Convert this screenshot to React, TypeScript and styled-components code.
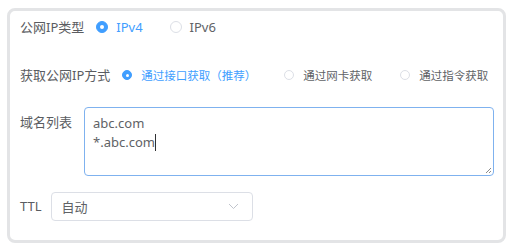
import * as React from "react";
import styled, { createGlobalStyle } from "styled-components";

const GlobalStyle = createGlobalStyle`
  html, body {
    margin: 0;
    padding: 0;
    background: #fff;
  }
  body {
    font-family: "Noto Sans", "Noto Sans CJK SC", sans-serif;
    color: #606266;
  }
`;

const Page = styled.div`
  width: 516px;
  height: 249px;
  padding: 8px 10px 6px 7px;
  box-sizing: border-box;
`;

const Card = styled.div`
  height: 235px;
  box-sizing: border-box;
  border: 3px solid #e3e4e6;
  border-radius: 8px;
  background: #fff;
  padding: 0 9px 0 10px;
  display: flex;
  flex-direction: column;
  gap: 16px;
`;

const Row = styled.div<{ $top?: boolean; $h?: number }>`
  display: flex;
  align-items: ${(p) => (p.$top ? "flex-start" : "center")};
  min-height: ${(p) => (p.$h ? `${p.$h}px` : "auto")};
`;

const Label = styled.span<{ $pad?: number; $gap?: number }>`
  font-size: 13px;
  line-height: 19px;
  color: #5a5c61;
  margin-right: ${(p) => (p.$gap ?? 12)}px;
  white-space: nowrap;
  padding-top: ${(p) => p.$pad || 0}px;
`;

const Options = styled.div<{ $gap: number }>`
  display: flex;
  align-items: center;
  gap: ${(p) => p.$gap}px;
`;

const Option = styled.label<{ $small?: boolean }>`
  display: flex;
  align-items: center;
  gap: ${(p) => (p.$small ? 9 : 8)}px;
  font-size: ${(p) => (p.$small ? "11.5px" : "13px")};
  white-space: nowrap;
`;

const Dot = styled.span<{ $on?: boolean; $size: number }>`
  width: ${(p) => p.$size}px;
  height: ${(p) => p.$size}px;
  box-sizing: border-box;
  border-radius: 50%;
  border: 1px solid ${(p) => (p.$on ? "#409eff" : "#dcdfe6")};
  background: ${(p) => (p.$on ? "#409eff" : "#fff")};
  display: flex;
  align-items: center;
  justify-content: center;
  &::after {
    content: "";
    width: ${(p) => Math.round(p.$size / 3)}px;
    height: ${(p) => Math.round(p.$size / 3)}px;
    border-radius: 50%;
    background: #fff;
    display: ${(p) => (p.$on ? "block" : "none")};
  }
`;

const OptText = styled.span<{ $on?: boolean }>`
  color: ${(p) => (p.$on ? "#409eff" : "#606266")};
`;

const Area = styled.div`
  position: relative;
  flex: 1;
  height: 69px;
  box-sizing: border-box;
  border: 1px solid #7fb2ef;
  border-radius: 4px;
  padding: 6px 8px;
  font-size: 13px;
  line-height: 19px;
  color: #606266;
`;

const Caret = styled.span`
  display: inline-block;
  width: 1px;
  height: 17px;
  background: #303133;
  vertical-align: -4px;
`;

const Grip = styled.svg`
  position: absolute;
  right: 1px;
  bottom: 1px;
`;

const Select = styled.div`
  width: 202px;
  height: 29px;
  box-sizing: border-box;
  border: 1px solid #dcdfe6;
  border-radius: 4px;
  display: flex;
  align-items: center;
  justify-content: space-between;
  padding: 0 13px 0 10px;
  font-size: 13px;
  color: #606266;
`;

export default function App() {
  return (
    <Page>
      <GlobalStyle />
      <Card>
        <Row $h={32}>
          <Label>公网IP类型</Label>
          <Options $gap={27}>
            <Option>
              <Dot $on $size={12} />
              <OptText $on>IPv4</OptText>
            </Option>
            <Option>
              <Dot $size={12} />
              <OptText>IPv6</OptText>
            </Option>
          </Options>
        </Row>
        <Row $h={32}>
          <Label>获取公网IP方式</Label>
          <Options $gap={28}>
            <Option $small>
              <Dot $on $size={10} />
              <OptText $on>通过接口获取（推荐）</OptText>
            </Option>
            <Option $small>
              <Dot $size={10} />
              <OptText>通过网卡获取</OptText>
            </Option>
            <Option $small>
              <Dot $size={10} />
              <OptText>通过指令获取</OptText>
            </Option>
          </Options>
        </Row>
        <Row $top>
          <Label $pad={6}>域名列表</Label>
          <Area>
            <div>abc.com</div>
            <div>
              *.abc.com
              <Caret />
            </div>
            <Grip width="8" height="8" viewBox="0 0 8 8">
              <path d="M7 2 L2 7 M7 5 L5 7" stroke="#8a8a8a" strokeWidth="1" fill="none" />
            </Grip>
          </Area>
        </Row>
        <Row>
          <Label $gap={9}>TTL</Label>
          <Select>
            <span>自动</span>
            <svg width="11" height="7" viewBox="0 0 11 7">
              <path d="M1 1 L5.5 5.5 L10 1" stroke="#c0c4cc" strokeWidth="1" fill="none" />
            </svg>
          </Select>
        </Row>
      </Card>
    </Page>
  );
}
